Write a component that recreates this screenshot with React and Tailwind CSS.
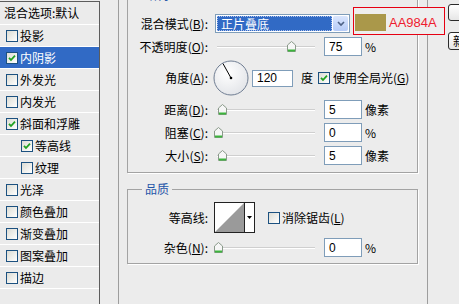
import React from "react";

const items = [
  { t: "投影" },
  { t: "内阴影", c: true, sel: true },
  { t: "外发光" },
  { t: "内发光" },
  { t: "斜面和浮雕", c: true },
  { t: "等高线", c: true, sub: true },
  { t: "纹理", sub: true },
  { t: "光泽" },
  { t: "颜色叠加" },
  { t: "渐变叠加" },
  { t: "图案叠加" },
  { t: "描边" },
];

function Check({ on }) {
  return (
    <span className="inline-flex shrink-0 w-[12px] h-[12px] border border-[#1c5180] bg-linear-to-br from-[#dcdcd4] to-white items-center justify-center">
      {on && (
        <svg width="8" height="8" viewBox="0 0 8 8">
          <path d="M1 3.8 L3 6 L7 1.6" stroke="#21a121" strokeWidth="1.8" fill="none" />
        </svg>
      )}
    </span>
  );
}

function Label({ text, k, w = "w-[80px]" }) {
  return (
    <span className={`${w} shrink-0 text-right whitespace-nowrap`}>
      {text}
      {k && (
        <>
          (<span className="underline">{k}</span>)
        </>
      )}
      :
    </span>
  );
}

function Thumb() {
  return (
    <svg width="9" height="11" viewBox="0 0 9 11">
      <path d="M0.5 4 L4.5 0.5 L8.5 4 L8.5 10.5 L0.5 10.5Z" fill="#f6f6f6" stroke="#8a9a8a" />
      <path d="M1 9.5 H8" stroke="#3cb43c" strokeWidth="2" />
    </svg>
  );
}

// pos = thumb left offset inside the slider
function Slider({ pos }) {
  return (
    <div className="relative ml-[5px] w-[102px] h-[19px] shrink-0">
      <div className="absolute left-[4px] right-0 top-[9px] h-[2px] bg-[#cfcfcf] border-b border-white" />
      <div className="absolute top-[4px]" style={{ left: pos }}>
        <Thumb />
      </div>
    </div>
  );
}

function Field({ v, w = "w-[38px]", h = "h-[19px]" }) {
  return (
    <div className={`${w} ${h} shrink-0 border border-[#7f9db9] bg-white pl-[4px] flex items-center font-['Liberation_Sans',sans-serif] text-[12px]`}>
      {v}
    </div>
  );
}

function SliderRow({ text, k, pos, v, unit }) {
  return (
    <div className="flex items-center h-[19px]">
      <Label text={text} k={k} />
      <Slider pos={pos} />
      <div className="ml-[9px]">
        <Field v={v} />
      </div>
      <span className="ml-[3px]">{unit}</span>
    </div>
  );
}

function Dial() {
  return (
    <svg width="36" height="36" viewBox="0 0 36 36" className="shrink-0">
      <defs>
        <radialGradient id="dg" cx="0.4" cy="0.35" r="0.7">
          <stop offset="0" stopColor="#ffffff" />
          <stop offset="1" stopColor="#e2e4e8" />
        </radialGradient>
      </defs>
      <circle cx="18" cy="18" r="17" fill="url(#dg)" stroke="#6f7d92" />
      <line x1="18" y1="18" x2="10" y2="3.6" stroke="#000" strokeWidth="1" />
      <circle cx="18" cy="18" r="1.3" fill="#000" />
    </svg>
  );
}

export default function App() {
  return (
    <div className="relative w-[459px] h-[304px] overflow-hidden bg-[#ececec] flex text-[12px] leading-[14px] text-black font-['Noto_Sans_CJK_SC','Noto_Sans',sans-serif]">
      {/* style list */}
      <div className="w-[100px] shrink-0 mt-[1px] border-t border-r border-[#5c5c5c] bg-[#ebebeb] flex flex-col">
        <div className="h-[23px] border-b border-white flex items-center pl-[4px]">混合选项:默认</div>
        {items.map((it) => (
          <div
            key={it.t}
            className={`h-[22px] border-b border-white flex items-center ${it.sub ? "pl-[21px]" : "pl-[6px]"} ${
              it.sel ? "bg-[#316ac5] text-white" : ""
            }`}
          >
            <Check on={it.c} />
            <span className="ml-[2px]">{it.t}</span>
          </div>
        ))}
      </div>

      {/* effect panel */}
      <div className="ml-[18px] w-[310px] shrink-0 border-l border-r border-[#9d9d9d] pl-[8px] pr-[9px] flex flex-col">
        {/* 结构 */}
        <div className="relative -mt-[4px] w-[291px] border border-[#a3a3a3] shadow-[1px_1px_0_#fff] pt-[17px] pb-[7px] flex flex-col gap-[4px]">
          <span className="absolute -top-[9px] left-[14px] px-[3px] bg-[#ececec] text-[#1f55a8]">结构</span>
          <div className="flex items-center h-[19px]">
            <Label text="混合模式" k="B" />
            <div className="ml-[7px] flex w-[135px] h-[19px] border border-[#7f9db9] bg-white">
              <div className="flex-1 m-[1px] bg-[#316ac5] border border-dotted border-[#aac0ee] text-white pl-[3px] flex items-center">
                正片叠底
              </div>
              <div className="w-[15px] my-[1px] mr-[1px] rounded-[2px] bg-linear-to-b from-[#dbe6fd] to-[#b5cbf7] flex items-center justify-center">
                <svg width="8" height="6" viewBox="0 0 8 6">
                  <path d="M1 1 L4 4 L7 1" stroke="#4d6185" strokeWidth="1.6" fill="none" />
                </svg>
              </div>
            </div>
          </div>
          <SliderRow text="不透明度" k="O" pos={74} v="75" unit="%" />
          <div className="flex items-center h-[36px]">
            <Label text="角度" k="A" />
            <div className="ml-[5px]">
              <Dial />
            </div>
            <div className="ml-[3px]">
              <Field v="120" w="w-[41px]" h="h-[17px]" />
            </div>
            <span className="ml-[8px]">度</span>
            <div className="ml-[5px] flex items-center">
              <Check on />
            </div>
            <span className="ml-[3px]">
              使用全局光(<span className="underline">G</span>)
            </span>
          </div>
          <SliderRow text="距离" k="D" pos={5} v="5" unit="像素" />
          <SliderRow text="阻塞" k="C" pos={1} v="0" unit="%" />
          <SliderRow text="大小" k="S" pos={5} v="5" unit="像素" />
        </div>

        {/* 品质 */}
        <div className="relative mt-[16px] w-[291px] border border-[#a3a3a3] shadow-[1px_1px_0_#fff] pt-[12px] pb-[6px] flex flex-col gap-[5px]">
          <span className="absolute -top-[8px] left-[14px] px-[3px] bg-[#ececec] text-[#1f55a8]">品质</span>
          <div className="flex items-center h-[31px]">
            <Label text="等高线" />
            <div className="ml-[6px] flex w-[41px] h-[31px] border border-[#222] bg-white">
              <svg width="29" height="29" viewBox="0 0 29 29">
                <polygon points="0,29 29,0 29,29" fill="#9a9a9a" />
              </svg>
              <div className="flex-1 border-l border-[#222] flex items-center justify-center">
                <svg width="5" height="3" viewBox="0 0 5 3">
                  <polygon points="0,0 5,0 2.5,3" fill="#000" />
                </svg>
              </div>
            </div>
            <div className="ml-[13px] flex items-center">
              <Check />
            </div>
            <span className="ml-[2px]">
              消除锯齿(<span className="underline">L</span>)
            </span>
          </div>
          <SliderRow text="杂色" k="N" pos={1} v="0" unit="%" />
        </div>
      </div>

      {/* buttons */}
      <div className="ml-[20px] flex flex-col shrink-0">
        <div className="mt-[4px] w-[75px] h-[17px] rounded-[3px] border border-[#2b2b2b] bg-linear-to-b from-white to-[#e6e6e6] flex items-center justify-center">
          确定
        </div>
        <div className="mt-[11px] w-[92px] h-[18px] rounded-[3px] border border-[#2b2b2b] bg-linear-to-b from-white to-[#e6e6e6] flex items-center pl-[4px]">
          新建样式(W)...
        </div>
      </div>

      {/* annotation */}
      <div className="absolute left-[353px] top-[7px] w-[92px] h-[28px] border border-[#e60012] bg-[#eeeeee] flex items-start pt-[6px] pl-[1px]">
        <div className="w-[31px] h-[17px] bg-[#aa984a]" />
        <span className="ml-[3px] leading-[17px] text-[13px] text-[#ee1c2e] font-['Liberation_Sans',sans-serif]">AA984A</span>
      </div>
    </div>
  );
}
